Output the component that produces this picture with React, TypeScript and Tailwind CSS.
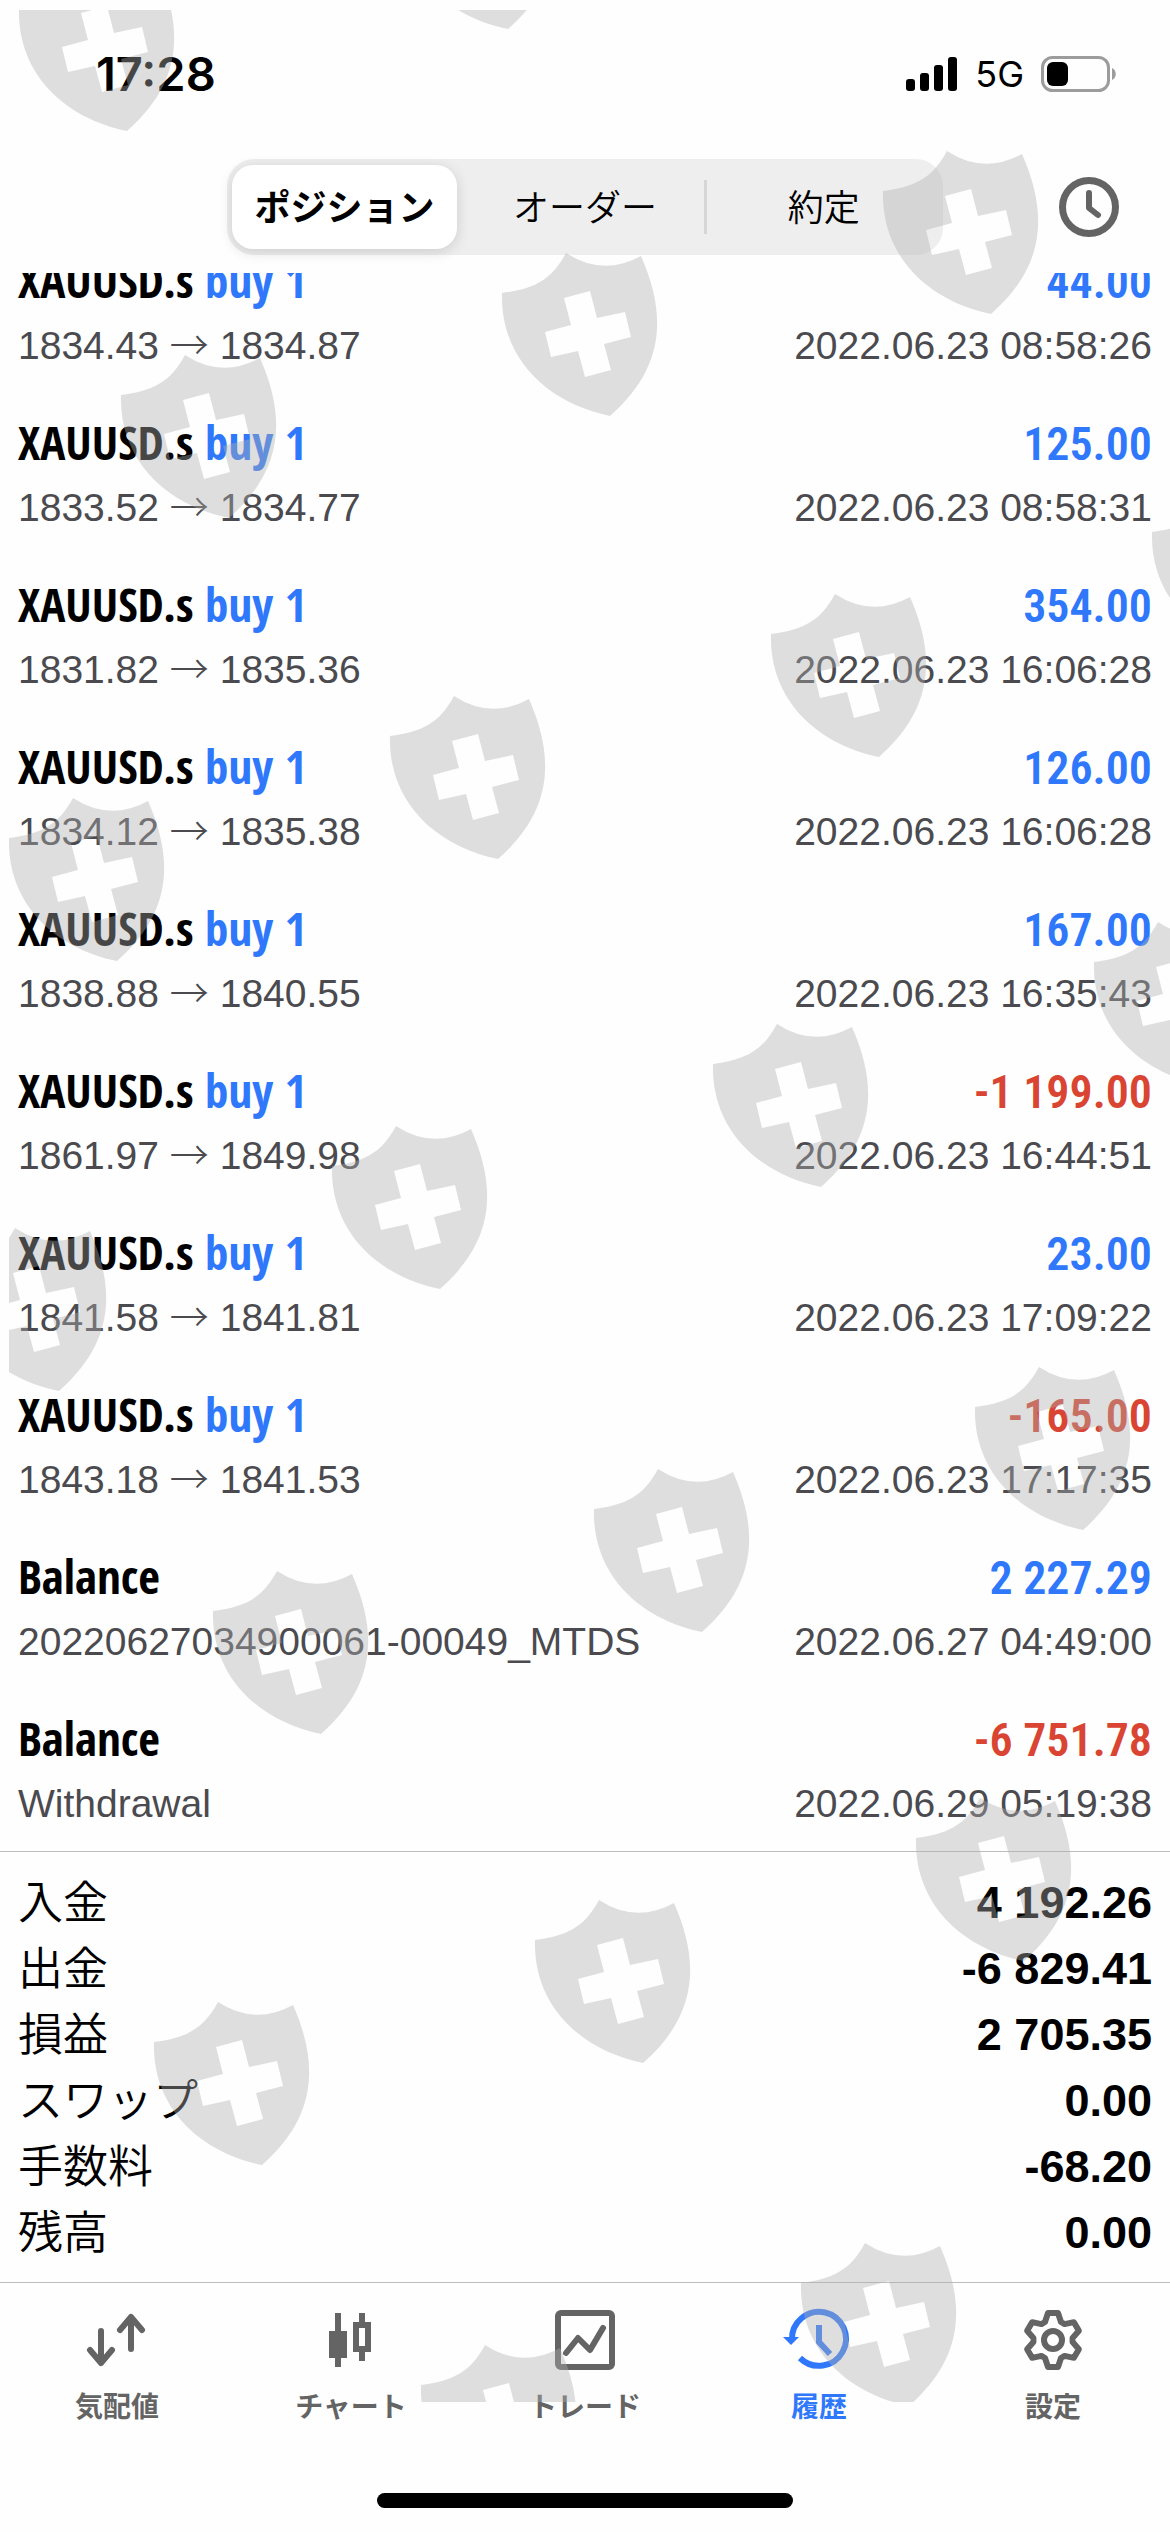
import { useState, type ReactNode } from 'react';

type Entry = {
  title: string;
  side?: string;
  from?: string;
  to?: string;
  note?: string;
  time: string;
  amount: string;
};

const entries: Entry[] = [
  { title: 'XAUUSD.s', side: 'buy 1', from: '1834.43', to: '1834.87', time: '2022.06.23 08:58:26', amount: '44.00' },
  { title: 'XAUUSD.s', side: 'buy 1', from: '1833.52', to: '1834.77', time: '2022.06.23 08:58:31', amount: '125.00' },
  { title: 'XAUUSD.s', side: 'buy 1', from: '1831.82', to: '1835.36', time: '2022.06.23 16:06:28', amount: '354.00' },
  { title: 'XAUUSD.s', side: 'buy 1', from: '1834.12', to: '1835.38', time: '2022.06.23 16:06:28', amount: '126.00' },
  { title: 'XAUUSD.s', side: 'buy 1', from: '1838.88', to: '1840.55', time: '2022.06.23 16:35:43', amount: '167.00' },
  { title: 'XAUUSD.s', side: 'buy 1', from: '1861.97', to: '1849.98', time: '2022.06.23 16:44:51', amount: '-1 199.00' },
  { title: 'XAUUSD.s', side: 'buy 1', from: '1841.58', to: '1841.81', time: '2022.06.23 17:09:22', amount: '23.00' },
  { title: 'XAUUSD.s', side: 'buy 1', from: '1843.18', to: '1841.53', time: '2022.06.23 17:17:35', amount: '-165.00' },
  { title: 'Balance', note: '20220627034900061-00049_MTDS', time: '2022.06.27 04:49:00', amount: '2 227.29' },
  { title: 'Balance', note: 'Withdrawal', time: '2022.06.29 05:19:38', amount: '-6 751.78' },
];

const totals = [
  ['入金', '4 192.26'],
  ['出金', '-6 829.41'],
  ['損益', '2 705.35'],
  ['スワップ', '0.00'],
  ['手数料', '-68.20'],
  ['残高', '0.00'],
];

const segments = ['ポジション', 'オーダー', '約定'];

/* Top-left corners of every badge in the diagonal watermark grid. */
const badges = [
  [19, -32], [400, -134],
  [883, 151], [502, 253], [121, 355],
  [1152, 492], [771, 594], [390, 696], [9, 798],
  [1094, 922], [713, 1024], [332, 1126], [-49, 1228],
  [975, 1367], [594, 1469], [213, 1571],
  [916, 1798], [535, 1900], [154, 2002],
  [801, 2243], [421, 2345],
];

const badgePath =
  'M64 0Q101 24 139 3C165 62 163 115 108 163C45 150 -2 105 0 40C31 36 49 28 64 0Z' +
  'M62 45L88 38L95 65L123 59L129 84L102 91L109 117L83 124L76 98L49 104L43 79L69 72Z';

function Watermark() {
  return (
    <div className="pointer-events-none absolute top-[10px] right-0 bottom-[130px] left-[9px] overflow-hidden" aria-hidden="true">
      <svg width="1161" height="2392" viewBox="9 10 1161 2392" className="max-w-none">
        <g fill="#aeaeae" fillOpacity="0.4" fillRule="evenodd">
          {badges.map(([x, y]) => (
            <path key={`${x},${y}`} d={badgePath} transform={`translate(${x} ${y})`} />
          ))}
        </g>
      </svg>
    </div>
  );
}

function StatusBar() {
  return (
    <div className="flex h-[149px] items-start justify-between pt-[46px] pr-[53px] pl-[96px] font-['Inter',sans-serif] text-black">
      <time className="text-[47px] leading-[56px] font-semibold">17:28</time>
      <div className="flex items-center gap-[17px]">
        <svg width="52" height="36" viewBox="0 0 52 36" aria-label="Signal">
          <rect x="0" y="23" width="9" height="12" rx="3" />
          <rect x="14" y="17" width="9" height="18" rx="3" />
          <rect x="28" y="9" width="9" height="26" rx="3" />
          <rect x="42" y="1" width="9" height="34" rx="3" />
        </svg>
        <span className="text-[36px] leading-[56px]">5G</span>
        <svg width="76" height="36" viewBox="0 0 76 36" aria-label="Battery">
          <rect x="1.5" y="1.5" width="66" height="33" rx="10" fill="none" stroke="#9c9c9c" strokeWidth="3" />
          <rect x="6" y="6" width="21" height="24" rx="6" />
          <path d="M71 12C76 14 76 22 71 24Z" fill="#9c9c9c" />
        </svg>
      </div>
    </div>
  );
}

function Header() {
  const [active, setActive] = useState(0);
  return (
    <header className="relative flex items-center justify-center pt-[10px] pb-[18px]">
      <div role="tablist" className="grid w-[716px] grid-cols-3 rounded-[27px] bg-[#eeeeee] font-['Noto_Sans_CJK_JP',sans-serif] text-[36px] leading-[52px] font-[350] text-black">
        {segments.map((label, i) => (
          <div
            key={label}
            className={i === 2 ? 'relative py-[6px] before:absolute before:inset-y-[21px] before:left-0 before:w-[3px] before:bg-[#d6d6d6]' : 'py-[6px]'}
          >
            <button
              type="button"
              role="tab"
              aria-selected={active === i}
              onClick={() => setActive(i)}
              className={
                active === i
                  ? 'mr-[9px] ml-[5px] block w-[225px] rounded-[21px] bg-white pt-[14px] pb-[18px] font-bold shadow-[0_3px_14px_rgba(0,0,0,0.14)]'
                  : 'block w-full pt-[14px] pb-[18px]'
              }
            >
              {label}
            </button>
          </div>
        ))}
      </div>
      <button type="button" aria-label="期間" className="absolute right-[51px]">
        <svg width="60" height="60" viewBox="0 0 60 60" fill="none" stroke="#646464">
          <circle cx="30" cy="30" r="26.5" strokeWidth="7" />
          <path d="M30 16V31L39 38" strokeWidth="6" strokeLinecap="round" strokeLinejoin="round" />
        </svg>
      </button>
    </header>
  );
}

function Row({ entry }: { entry: Entry }) {
  return (
    <li>
      <div className="flex h-[66px] items-baseline justify-between leading-16">
        <span className="font-['Open_Sans_Condensed','Roboto_Condensed',sans-serif] text-[47px] font-bold text-black">
          {entry.title}
          {entry.side && <span className="text-[#2f78fb]"> {entry.side}</span>}
        </span>
        <span
          className={
            entry.amount.startsWith('-')
              ? "font-['Roboto_Condensed','Liberation_Sans',sans-serif] text-[46px] font-semibold text-[#d94532]"
              : "font-['Roboto_Condensed','Liberation_Sans',sans-serif] text-[46px] font-semibold text-[#2f78fb]"
          }
        >
          {entry.amount}
        </span>
      </div>
      <div className="flex h-16 items-baseline justify-between text-[39px] leading-16 text-[#4a4a4f]">
        <span>
          {entry.note ?? (
            <>
              {entry.from} <span className="font-['Noto_Sans_CJK_JP',sans-serif] leading-none font-light">→</span> {entry.to}
            </>
          )}
        </span>
        <time>{entry.time}</time>
      </div>
    </li>
  );
}

/* One gear tooth (top position) repeated every 60 degrees. */
const gearPoints = Array.from({ length: 6 }, (_, i) => {
  const a = (i * Math.PI) / 3;
  return [[-8, -18], [-5, -27], [5, -27], [8, -18]]
    .map(([x, y]) => `${30 + x * Math.cos(a) - y * Math.sin(a)},${30 + x * Math.sin(a) + y * Math.cos(a)}`)
    .join(' ');
}).join(' ');

function Tab({ label, active, children }: { label: string; active?: boolean; children: ReactNode }) {
  return (
    <a
      href="#"
      aria-current={active ? 'page' : undefined}
      className={
        active
          ? 'flex flex-col items-center gap-[17px] text-[#2f78fb]'
          : 'flex flex-col items-center gap-[17px] text-[#646464]'
      }
    >
      <svg width="60" height="60" viewBox="0 0 60 60" fill="none" stroke="currentColor" strokeWidth="6" className="overflow-visible">
        {children}
      </svg>
      <span className="font-['Noto_Sans_CJK_JP',sans-serif] text-[28px] leading-9 font-bold">{label}</span>
    </a>
  );
}

export default function App() {
  return (
    <div className="relative flex min-h-screen flex-col overflow-hidden bg-[#fefefe] font-['Liberation_Sans',sans-serif]">
      <StatusBar />
      <Header />
      <main className="overflow-hidden px-[18px] pb-[15px]">
        <ul className="-mt-[25px] flex flex-col gap-8">
          {entries.map((entry, i) => (
            <Row key={i} entry={entry} />
          ))}
        </ul>
      </main>
      <dl className="border-t border-[#bdbdbf] px-[18px] pt-[18px] pb-[16px] text-[45px] leading-[66px] text-black">
        {totals.map(([label, value]) => (
          <div key={label} className="flex h-[66px] justify-between">
            <dt className="font-['Noto_Sans_CJK_JP',sans-serif] leading-[60px] font-[350]">{label}</dt>
            <dd className="font-bold">{value}</dd>
          </div>
        ))}
      </dl>
      <nav className="grid grid-cols-5 border-t border-[#bdbdbf] pt-[27px]">
        <Tab label="気配値">
          <path d="M14 21V53M3 40L14 53L25 40M44 39V7M33 20L44 7L55 20" strokeLinecap="round" strokeLinejoin="round" />
        </Tab>
        <Tab label="チャート">
          <path
            d="M14 3H20V21H26V48H20V57H14V48H8V21H14ZM38 3H44V12H50V42H44V51H38V42H32V12H38ZM38 18V36H44V18Z"
            fill="currentColor"
            fillRule="evenodd"
            stroke="none"
          />
        </Tab>
        <Tab label="トレード">
          <rect x="3" y="3" width="54" height="54" rx="3" />
          <path d="M11 43L23 28L35 40L48 18" strokeLinecap="round" strokeLinejoin="round" />
        </Tab>
        <Tab label="履歴" active>
          <path d="M3 30A27 27 0 1 1 11 48" />
          <path d="M-6 27H10L2 35Z" fill="currentColor" stroke="none" />
          <path d="M30 15V32L41 44" />
        </Tab>
        <Tab label="設定">
          <polygon points={gearPoints} strokeLinejoin="round" />
          <circle cx="30" cy="30" r="9" />
        </Tab>
      </nav>
      <div className="mx-auto mt-[70px] mb-6 h-[15px] w-[416px] rounded-full bg-black" />
      <Watermark />
    </div>
  );
}
